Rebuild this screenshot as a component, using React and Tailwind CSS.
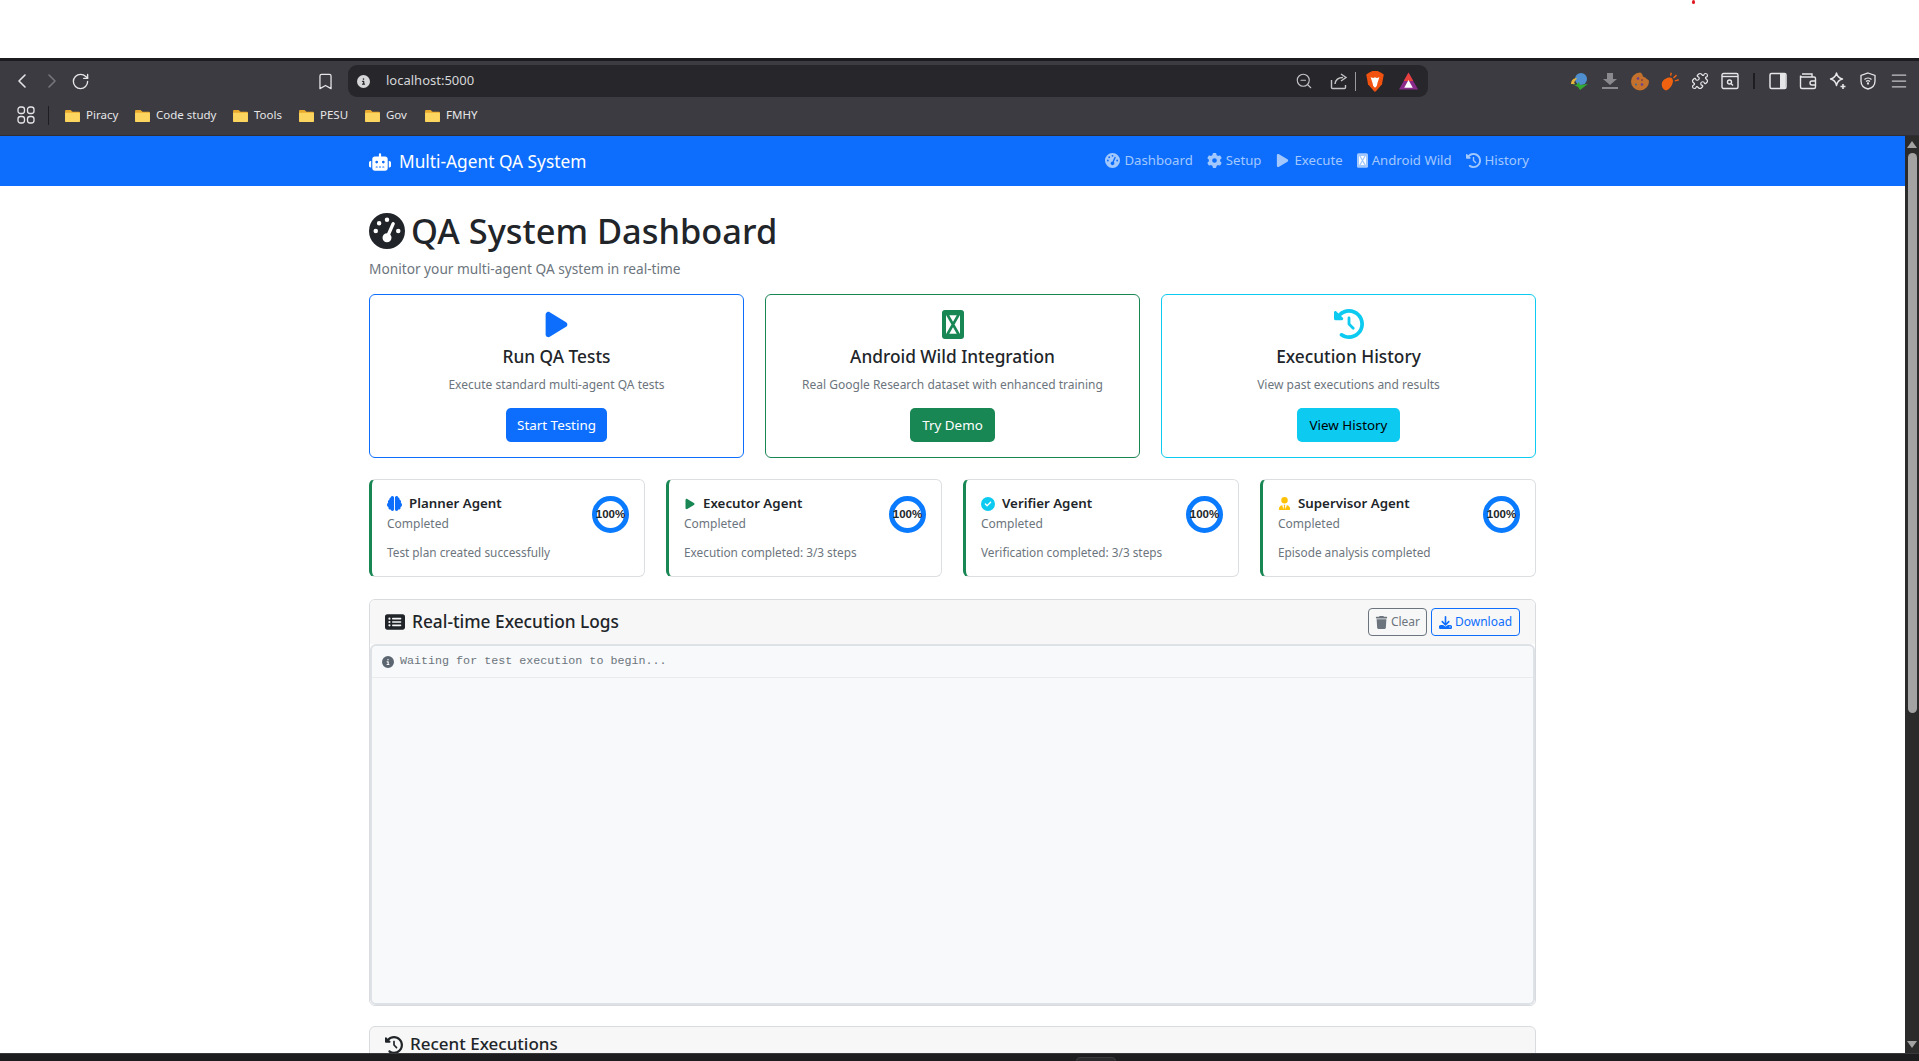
import React from 'react';
import {
  FaRobot, FaGaugeHigh, FaGear, FaPlay, FaClockRotateLeft, FaBrain, FaCircleCheck,
  FaUserTie, FaRectangleList, FaTrash, FaDownload, FaCircleInfo,
} from 'react-icons/fa6';
import { ChevronLeft, ChevronRight, RotateCw, Bookmark, ZoomOut, Puzzle, Menu } from 'lucide-react';

// the page's android icon never loaded, so the browser shows a missing glyph box
const MissingGlyph = ({ className }) => (
  <svg viewBox="0 0 22 29" className={className} fill="none">
    <rect width="22" height="29" rx="3" fill="currentColor" />
    <path d="M4 4h14v21H4z" fill="#fff" />
    <path d="M5 4l12 21M17 4L5 25M4 4h14M4 25h14" stroke="currentColor" strokeWidth="2.6" />
  </svg>
);

const BookmarkItem = ({ label, className }) => (
  <div className={`flex items-center gap-[6px] text-[11.5px] text-[#e6e6e8] ${className}`}>
    <svg viewBox="0 0 16 14" className="w-[15px] h-[13px]">
      <path d="M0 2a1 1 0 011-1h5l2 2h7a1 1 0 011 1v9a1 1 0 01-1 1H1a1 1 0 01-1-1z" fill="#e8a92c" />
      <path d="M0 4h16v9a1 1 0 01-1 1H1a1 1 0 01-1-1z" fill="#fbd560" />
    </svg>
    <span>{label}</span>
  </div>
);

const BrowserChrome = () => (
  <div className="shrink-0">
    <div className="h-[3px] bg-[#1c1c20]" />
    <div className="h-[75px] bg-[#3c3b41] border-b border-[#2f2e33] text-[#e6e6e8]">
      <div className="h-[40px] flex items-center relative">
        <ChevronLeft size={24} strokeWidth={1.6} className="ml-[10px]" />
        <ChevronRight size={24} strokeWidth={1.6} className="ml-[6px] text-[#77767c]" />
        <RotateCw size={19} strokeWidth={1.7} className="ml-[7px]" />
        <Bookmark size={19} strokeWidth={1.6} className="ml-[226px]" />
        <div className="ml-[13px] w-[1080px] h-[32px] rounded-[9px] bg-[#26262b] flex items-center">
          <FaCircleInfo size={13} className="ml-[9px] text-[#d6d6d8]" />
          <span className="ml-[16px] text-[13px] text-[#d6d6d8]">localhost:5000</span>
          <ZoomOut size={18} strokeWidth={1.5} className="ml-auto text-[#c4c4c6]" />
          <svg viewBox="0 0 18 18" className="w-[18px] h-[18px] ml-[17px] text-[#c4c4c6]" fill="none" stroke="currentColor" strokeWidth="1.4">
            <path d="M1.500 8v7.500a1 1 0 001 1h12a1 1 0 001-1V13" />
            <path d="M5 12c.5-4 3.500-6.500 8-6.500M11 2l5 3.500L11 9" />
          </svg>
          <div className="w-px h-[19px] bg-[#9a9a9e] ml-[7px]" />
          <svg viewBox="0 0 20 24" className="w-[18px] h-[21px] ml-[10px]">
            <path d="M3 2l4-2h6l4 2 3 2-2 11-6 7-2 2-2-2-6-7L0 4z" fill="#f1520f" />
            <path d="M5 7l3 1 2-1 2 1 3-1-2 6-1 4-2 2-2-2-1-4z" fill="#fff" />
          </svg>
          <svg viewBox="0 0 20 18" className="w-[19px] h-[18px] ml-[15px]">
            <path d="M10 0l10 18H0z" fill="#8a2a8a" />
            <path d="M10 0l5 9H5z" fill="#e8413c" />
            <path d="M10 8l4.500 8h-9z" fill="#fff" />
          </svg>
          <span className="w-[10px] shrink-0" />
        </div>
        <div className="ml-auto mr-[10px] flex items-center gap-[12px]">
          <svg viewBox="0 0 18 18" className="w-[18px] h-[18px]">
            <circle cx="10" cy="7" r="6" fill="#4f8fd0" />
            <path d="M0 12c0-4 3-6 6-6L4 9c-1 1-1 2 0 3z" fill="#e2b23c" />
            <path d="M1 12l4 1 3-3 1 3 8-1-8 6-2-3z" fill="#33a832" />
          </svg>
          <svg viewBox="0 0 18 18" className="w-[18px] h-[18px]" fill="#8a8a8e">
            <path d="M6 1h6v6h4l-7 6-7-6h4zM1 15h16v2H1z" />
          </svg>
          <svg viewBox="0 0 18 18" className="w-[18px] h-[19px]">
            <path d="M9 0c1 0 2 1 2.500 2.500 0 1.500 1.500 2.500 3 2.500 1 2 3.500 2 3.500 4a9 9 0 11-9-9z" fill="#c4712e" />
            <circle cx="7" cy="6" r="1.300" fill="#6b3f8f" />
            <circle cx="11" cy="12" r="1.300" fill="#6b3f8f" />
            <circle cx="5" cy="12" r="1.100" fill="#3f6b8f" />
            <circle cx="11" cy="7.500" r="1" fill="#8f3f3f" />
          </svg>
          <svg viewBox="0 0 18 18" className="w-[18px] h-[19px]" fill="#f0620f">
            <path d="M1 10c1-3 5-5 8-5 2 0 3 2 3 4-1 5-4 8-7 9-3-1-5-4-4-8z" />
            <path d="M9 3l.500-3 1.500.400-.800 3zM12 5l3-3 1 1.200-3 2.800zM13.500 8l4-1.500.500 1.500-4 1z" />
          </svg>
          <Puzzle size={18} strokeWidth={1.6} />
          <svg viewBox="0 0 18 18" className="w-[18px] h-[18px]" fill="none" stroke="currentColor" strokeWidth="1.400">
            <rect x="1" y="1.500" width="16" height="15" rx="1.500" />
            <path d="M1 4.500h16" />
            <circle cx="8.500" cy="10" r="2" />
            <path d="M10 11.500l2 2" />
          </svg>
          <div className="w-[2px] h-[16px] bg-[#1e1e22] mx-[2px]" />
          <svg viewBox="0 0 18 18" className="w-[18px] h-[18px]">
            <rect x="1" y="1.500" width="16" height="15" rx="1.500" fill="none" stroke="currentColor" strokeWidth="1.500" />
            <rect x="11" y="2" width="5.500" height="14" fill="currentColor" />
          </svg>
          <svg viewBox="0 0 18 18" className="w-[18px] h-[18px]" fill="none" stroke="currentColor" strokeWidth="1.400">
            <path d="M3 2h10v3M1.500 4v11a1.500 1.500 0 001.500 1.500h12a1.500 1.500 0 001.500-1.500V6.500A1.500 1.500 0 0015 5H3a1.500 1.500 0 01-1.500-1.500" />
            <path d="M17 9h-4a2 2 0 000 4h4" />
          </svg>
          <svg viewBox="0 0 18 18" className="w-[18px] h-[18px]" fill="none" stroke="currentColor" strokeWidth="1.400" strokeLinejoin="round">
            <path d="M7.500 1c.8 3.500 2.500 5.200 6 6-3.500.8-5.200 2.500-6 6.500-.8-4-2.500-5.700-6-6.500 3.500-.8 5.200-2.500 6-6z" />
            <path d="M14 12v5M11.500 14.500h5" strokeWidth="1.600" />
          </svg>
          <svg viewBox="0 0 18 18" className="w-[18px] h-[18px]" fill="none" stroke="currentColor" strokeWidth="1.300">
            <path d="M9 1l7 2.500V9c0 4-3 7-7 8-4-1-7-4-7-8V3.500z" />
            <path d="M5.500 7.500a5 5 0 017 0M7 9.500a3 3 0 014 0" />
            <circle cx="9" cy="11.500" r=".5" />
          </svg>
          <Menu size={20} strokeWidth={1.5} className="text-[#c4c4c6]" />
        </div>
      </div>
      <div className="h-[28px] flex items-center">
        <svg viewBox="0 0 18 18" className="ml-[17px] w-[18px] h-[18px]" fill="none" stroke="currentColor" strokeWidth="1.300">
          <rect x="1" y="1" width="6.500" height="6.500" rx="2.500" />
          <rect x="10.500" y="1" width="6.500" height="6.500" rx="2.500" />
          <rect x="1" y="10.500" width="6.500" height="6.500" rx="2.500" />
          <rect x="10.500" y="10.500" width="6.500" height="6.500" rx="2.500" />
        </svg>
        <div className="w-px h-[19px] bg-[#1e1e22] ml-[13px] mr-[16px]" />
        <BookmarkItem label="Piracy" className="w-[70px]" />
        <BookmarkItem label="Code study" className="w-[98px]" />
        <BookmarkItem label="Tools" className="w-[66px]" />
        <BookmarkItem label="PESU" className="w-[66px]" />
        <BookmarkItem label="Gov" className="w-[60px]" />
        <BookmarkItem label="FMHY" />
      </div>
    </div>
  </div>
);

const NavLink = ({ icon: Icon, label, custom }) => (
  <a className="flex items-center gap-[4px]">
    {custom ? <MissingGlyph className="w-[11px] h-[15px]" /> : <Icon size={15} />}
    <span>{label}</span>
  </a>
);

const Navbar = () => (
  <nav className="h-[50px] shrink-0 bg-[#0d6efd]">
    <div className="w-[1167px] mx-auto h-full flex items-center justify-between">
      <div className="flex items-center gap-[8px] text-white text-[17.3px] pt-[1px]">
        <FaRobot size={22} />
        <span>Multi-Agent QA System</span>
      </div>
      <div className="flex items-center gap-[14px] pr-[7px] text-[13.2px] text-[#a3c8fe]">
        <NavLink icon={FaGaugeHigh} label="Dashboard" />
        <NavLink icon={FaGear} label="Setup" />
        <NavLink icon={FaPlay} label="Execute" />
        <NavLink custom label="Android Wild" />
        <NavLink icon={FaClockRotateLeft} label="History" />
      </div>
    </div>
  </nav>
);

const ActionCard = ({ border, iconColor, icon, title, text, button, buttonClass }) => (
  <div className={`h-[164px] rounded-[6px] border ${border} bg-white flex flex-col items-center`}>
    <div className={`mt-[14px] h-[30px] flex items-center ${iconColor}`}>{icon}</div>
    <h5 className="mt-[4px] text-[17.3px] font-medium text-[#212529] leading-[28px]">{title}</h5>
    <p className="mt-[4px] text-[12px] text-[#6c757d] leading-[20px]">{text}</p>
    <button className={`mt-[13px] h-[34px] rounded-[5px] text-[13.4px] ${buttonClass}`}>{button}</button>
  </div>
);

const AgentCard = ({ icon, iconColor, name, text }) => (
  <div className="relative h-[98px] rounded-[6px] border border-[#dcdfe2] border-l-[3px] border-l-[#198754] bg-white pl-[15px] pt-[14px]">
    <div className="flex items-center gap-[7px] h-[19px]">
      <span className={iconColor}>{icon}</span>
      <span className="text-[13.3px] font-semibold text-[#212529]">{name}</span>
    </div>
    <div className="mt-[1px] text-[12px] leading-[19px] text-[#6c757d]">Completed</div>
    <div className="mt-[10px] text-[11.8px] leading-[19px] text-[#6c757d]">{text}</div>
    <div className="absolute right-[15px] top-[16px] w-[37px] h-[37px] rounded-full border-[5px] border-[#0a7bff] flex items-center justify-center">
      <span className="font-['Liberation_Sans',sans-serif] font-bold text-[11.5px] text-[#212529] whitespace-nowrap">100%</span>
    </div>
  </div>
);

const Dashboard = () => (
  <div className="w-[1167px] mx-auto">
    <h1 className="mt-[22px] flex items-center gap-[6px] text-[34.4px] leading-[46px] font-medium text-[#212529]">
      <FaGaugeHigh size={36} />
      <span>QA System Dashboard</span>
    </h1>
    <p className="mt-[3px] text-[13.7px] leading-[24px] text-[#6c757d]">Monitor your multi-agent QA system in real-time</p>

    <div className="mt-[13px] grid grid-cols-3 gap-[21px]">
      <ActionCard
        border="border-[#0d6efd]"
        iconColor="text-[#0d6efd]"
        icon={<FaPlay size={29} />}
        title="Run QA Tests"
        text="Execute standard multi-agent QA tests"
        button="Start Testing"
        buttonClass="w-[101px] bg-[#0d6efd] text-white"
      />
      <ActionCard
        border="border-[#198754]"
        iconColor="text-[#198754]"
        icon={<MissingGlyph className="w-[22px] h-[29px]" />}
        title="Android Wild Integration"
        text="Real Google Research dataset with enhanced training"
        button="Try Demo"
        buttonClass="w-[85px] bg-[#198754] text-white"
      />
      <ActionCard
        border="border-[#0dcaf0]"
        iconColor="text-[#0dcaf0]"
        icon={<FaClockRotateLeft size={30} />}
        title="Execution History"
        text="View past executions and results"
        button="View History"
        buttonClass="w-[103px] bg-[#0dcaf0] text-black"
      />
    </div>

    <div className="mt-[21px] grid grid-cols-4 gap-[21px]">
      <AgentCard icon={<FaBrain size={15} />} iconColor="text-[#0d6efd]" name="Planner Agent" text="Test plan created successfully" />
      <AgentCard icon={<FaPlay size={12} />} iconColor="text-[#198754]" name="Executor Agent" text="Execution completed: 3/3 steps" />
      <AgentCard icon={<FaCircleCheck size={14} />} iconColor="text-[#0dcaf0]" name="Verifier Agent" text="Verification completed: 3/3 steps" />
      <AgentCard icon={<FaUserTie size={13} />} iconColor="text-[#ffc107]" name="Supervisor Agent" text="Episode analysis completed" />
    </div>

    <div className="mt-[22px] rounded-[6px] border border-[#d9dcdf] bg-white">
      <div className="h-[44px] bg-[#f7f7f7] rounded-t-[6px] flex items-center justify-between pl-[15px] pr-[15px]">
        <div className="flex items-center gap-[7px] text-[17.3px] font-medium text-[#212529]">
          <FaRectangleList size={20} />
          <span>Real-time Execution Logs</span>
        </div>
        <div className="flex items-center gap-[4px] text-[12px]">
          <button className="w-[59px] h-[28px] rounded-[4px] border border-[#6c757d] text-[#6c757d] flex items-center justify-center gap-[3px]">
            <FaTrash size={13} />
            Clear
          </button>
          <button className="w-[89px] h-[28px] rounded-[4px] border border-[#0d6efd] text-[#0d6efd] flex items-center justify-center gap-[3px]">
            <FaDownload size={13} />
            Download
          </button>
        </div>
      </div>
      <div className="h-[361px] border-2 border-[#dee2e6] rounded-[6px] bg-[#f8f9fa]">
        <div className="h-[32px] border-b border-[#e9ecef] pl-[10px] flex items-center gap-[6px] text-[#6c757d] font-['Liberation_Mono',monospace] text-[11.7px]">
          <FaCircleInfo size={12} className="text-[#5c6670]" />
          <span>Waiting for test execution to begin...</span>
        </div>
      </div>
    </div>

    <div className="mt-[20px] h-[60px] rounded-t-[6px] border border-[#d9dcdf] bg-[#f7f7f7] pl-[15px] pt-[5px] flex items-start gap-[7px] text-[17px] font-medium text-[#212529]">
      <FaClockRotateLeft size={18} className="mt-[4px]" />
      <span className="leading-[24px]">Recent Executions</span>
    </div>
  </div>
);

const Scrollbar = () => (
  <div className="w-[14px] shrink-0 bg-[#2b2b2b] flex flex-col items-center relative">
    <div className="mt-[5px] w-0 h-0 border-x-[5px] border-x-transparent border-b-[7px] border-b-[#a3a3a3]" />
    <div className="mt-[5px] w-[9px] h-[560px] rounded-full bg-[#a3a3a3]" />
    <div className="mt-auto mb-[5px] w-0 h-0 border-x-[5px] border-x-transparent border-t-[7px] border-t-[#a3a3a3]" />
  </div>
);

export default function App() {
  return (
    <div className="h-screen flex flex-col overflow-hidden bg-white font-['Noto_Sans',sans-serif]">
      <div className="h-[58px] shrink-0 bg-white relative">
        <span className="absolute left-[1692px] top-0 w-[3px] h-[4px] rounded-full bg-[#e01b24]" />
      </div>
      <BrowserChrome />
      <div className="flex-1 min-h-0 flex">
        <div className="flex-1 min-w-0 overflow-hidden">
          <Navbar />
          <Dashboard />
        </div>
        <Scrollbar />
      </div>
      <div className="h-[8px] shrink-0 bg-[#1d1d1f] border-t border-[#39393b] relative">
        <span className="absolute left-[1076px] top-[3px] w-[40px] h-[6px] rounded-t-[4px] bg-[#2a2a2c] border border-[#3c3c3e]" />
      </div>
    </div>
  );
}
